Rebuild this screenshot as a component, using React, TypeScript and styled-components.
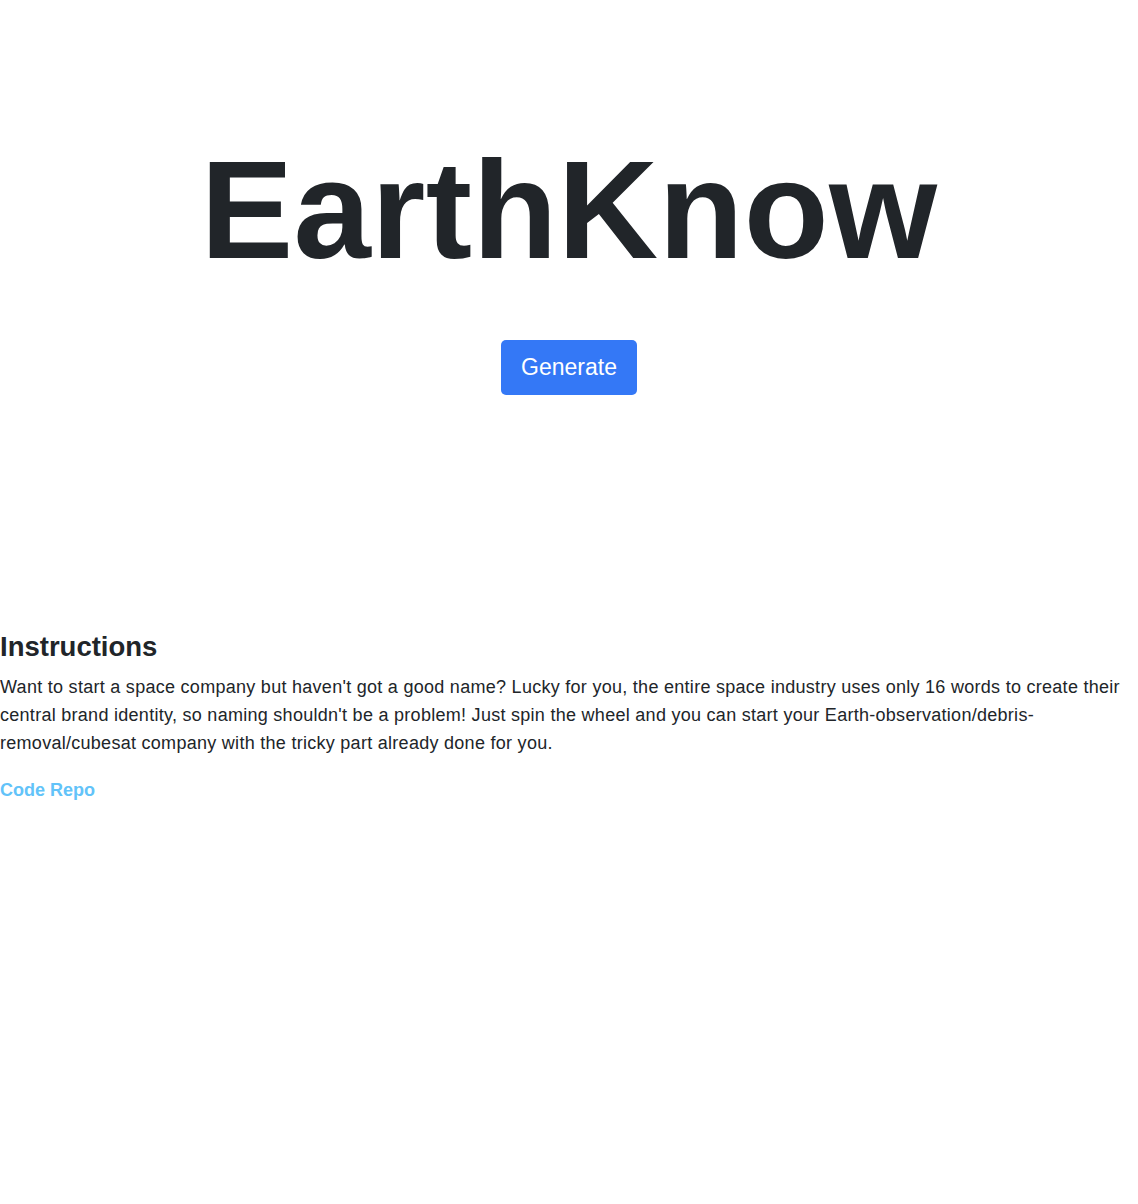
import React from "react";
import styled, { createGlobalStyle } from "styled-components";

const Global = createGlobalStyle`
  html, body { margin: 0; padding: 0; background: #ffffff; }
  body {
    font-family: "Liberation Sans", Arial, Helvetica, sans-serif;
    color: #212529;
  }
`;

const Page = styled.div`
  display: flex;
  flex-direction: column;
  min-height: 1204px;
`;

const Hero = styled.header`
  display: flex;
  flex-direction: column;
  align-items: center;
  padding-top: 127px;
  height: 504px;
  box-sizing: border-box;
`;

const Title = styled.h1`
  margin: 0;
  font-size: 139px;
  line-height: 1.2;
  font-weight: 700;
  color: #212529;
  letter-spacing: 0.4px;
`;

const GenerateButton = styled.button`
  margin-top: 46px;
  height: 55px;
  padding: 1px 20px 0;
  border: none;
  border-radius: 5px;
  background: #3478f6;
  color: #ffffff;
  font-family: "Liberation Sans", Arial, Helvetica, sans-serif;
  font-size: 23px;
  cursor: pointer;
`;

const Instructions = styled.section`
  display: flex;
  flex-direction: column;
  align-items: flex-start;
  padding-top: 126px;
`;

const Heading = styled.h3`
  margin: 0 0 10px;
  font-size: 27.5px;
  line-height: 1.2;
  font-weight: 700;
`;

const Paragraph = styled.p`
  margin: 0 0 19px;
  font-size: 18px;
  line-height: 28px;
  letter-spacing: 0.28px;
`;

const RepoLink = styled.a`
  font-size: 18px;
  line-height: 28px;
  font-weight: 700;
  color: #62c3f9;
  text-decoration: none;
`;

export default function App() {
  return (
    <>
      <Global />
      <Page>
        <Hero>
          <Title>EarthKnow</Title>
          <GenerateButton>Generate</GenerateButton>
        </Hero>
        <Instructions>
          <Heading>Instructions</Heading>
          <Paragraph>
            Want to start a space company but haven't got a good name? Lucky for you, the entire space
            industry uses only 16 words to create their central brand identity, so naming shouldn't be a
            problem! Just spin the wheel and you can start your Earth-observation/debris-removal/cubesat
            company with the tricky part already done for you.
          </Paragraph>
          <RepoLink href="#">Code Repo</RepoLink>
        </Instructions>
      </Page>
    </>
  );
}
